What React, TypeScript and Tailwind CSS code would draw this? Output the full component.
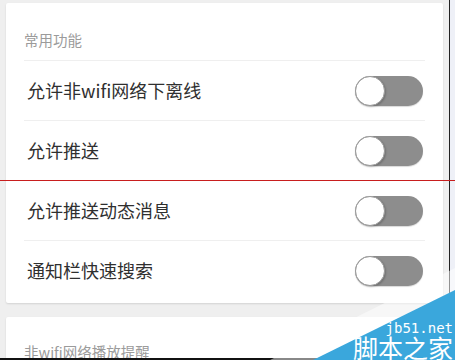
import React from "react";

const font = { fontFamily: '"Noto Sans CJK SC", "Noto Sans", sans-serif' };

const rows = ["允许非wifi网络下离线", "允许推送", "允许推送动态消息", "通知栏快速搜索"];

function Toggle() {
  return (
    <div className="relative w-[68px] h-[30px] rounded-full bg-[#8d8d8d] shadow-[0_1px_1px_rgba(0,0,0,0.15)]">
      <div className="absolute left-0 top-0 w-[30px] h-[30px] rounded-full bg-white border border-[#9a9a9a] shadow-[1px_1px_2px_rgba(0,0,0,0.2)]" />
    </div>
  );
}

export default function App() {
  return (
    <div className="relative w-[455px] h-[360px] overflow-hidden bg-[#efefef] flex" style={font}>
      {/* main column */}
      <div className="flex-1 px-[6px] pt-[3px] flex flex-col gap-[14px]">
        <div className="bg-white rounded-[2px] shadow-[0_1px_2px_rgba(0,0,0,0.12)] pb-[3px]">
          <div className="h-[57px] pt-[27px] pl-[18px] text-[14.5px] leading-[20px] text-[#9b9b9b]">常用功能</div>
          <div className="mx-[18px]">
            {rows.map((r) => (
              <div key={r} className="h-[60px] border-t border-[#efefef] flex items-center justify-between pl-[3px] pr-[2px]">
                <span className="text-[18px] text-[#2f2f2f]">{r}</span>
                <Toggle />
              </div>
            ))}
          </div>
        </div>
        <div className="bg-white rounded-[2px] shadow-[0_1px_2px_rgba(0,0,0,0.12)] h-[60px]">
          <div className="pt-[26px] pl-[18px] text-[14.5px] leading-[18px] text-[#9b9b9b]">非wifi网络播放提醒</div>
        </div>
      </div>
      <div className="w-px bg-[#222]" />
      <div className="w-[5px] bg-[#eef0f7]" />

      {/* screenshot marks */}
      <div className="absolute left-0 right-0 top-[180px] h-px bg-[#c81e1e]" />
      <div className="absolute left-0 right-0 bottom-0 h-[2px] bg-[#111]" />

      {/* watermark */}
      <svg className="absolute left-0 top-0" width="455" height="360" viewBox="0 0 455 360">
        <polygon points="270,360 455,268 455,360" fill="#ffffff" opacity="0.5" />
        <polygon points="313,360 455,290 455,360" fill="#3aa7dc" />
      </svg>
      <span className="absolute right-[2px] top-[321px] text-[14px] leading-[14px] text-white" style={{ fontFamily: '"DejaVu Sans Mono", monospace' }}>jb51.net</span>
      <span className="absolute right-[2px] top-[335px] text-[25px] leading-[25px] text-white">脚本之家</span>
    </div>
  );
}
